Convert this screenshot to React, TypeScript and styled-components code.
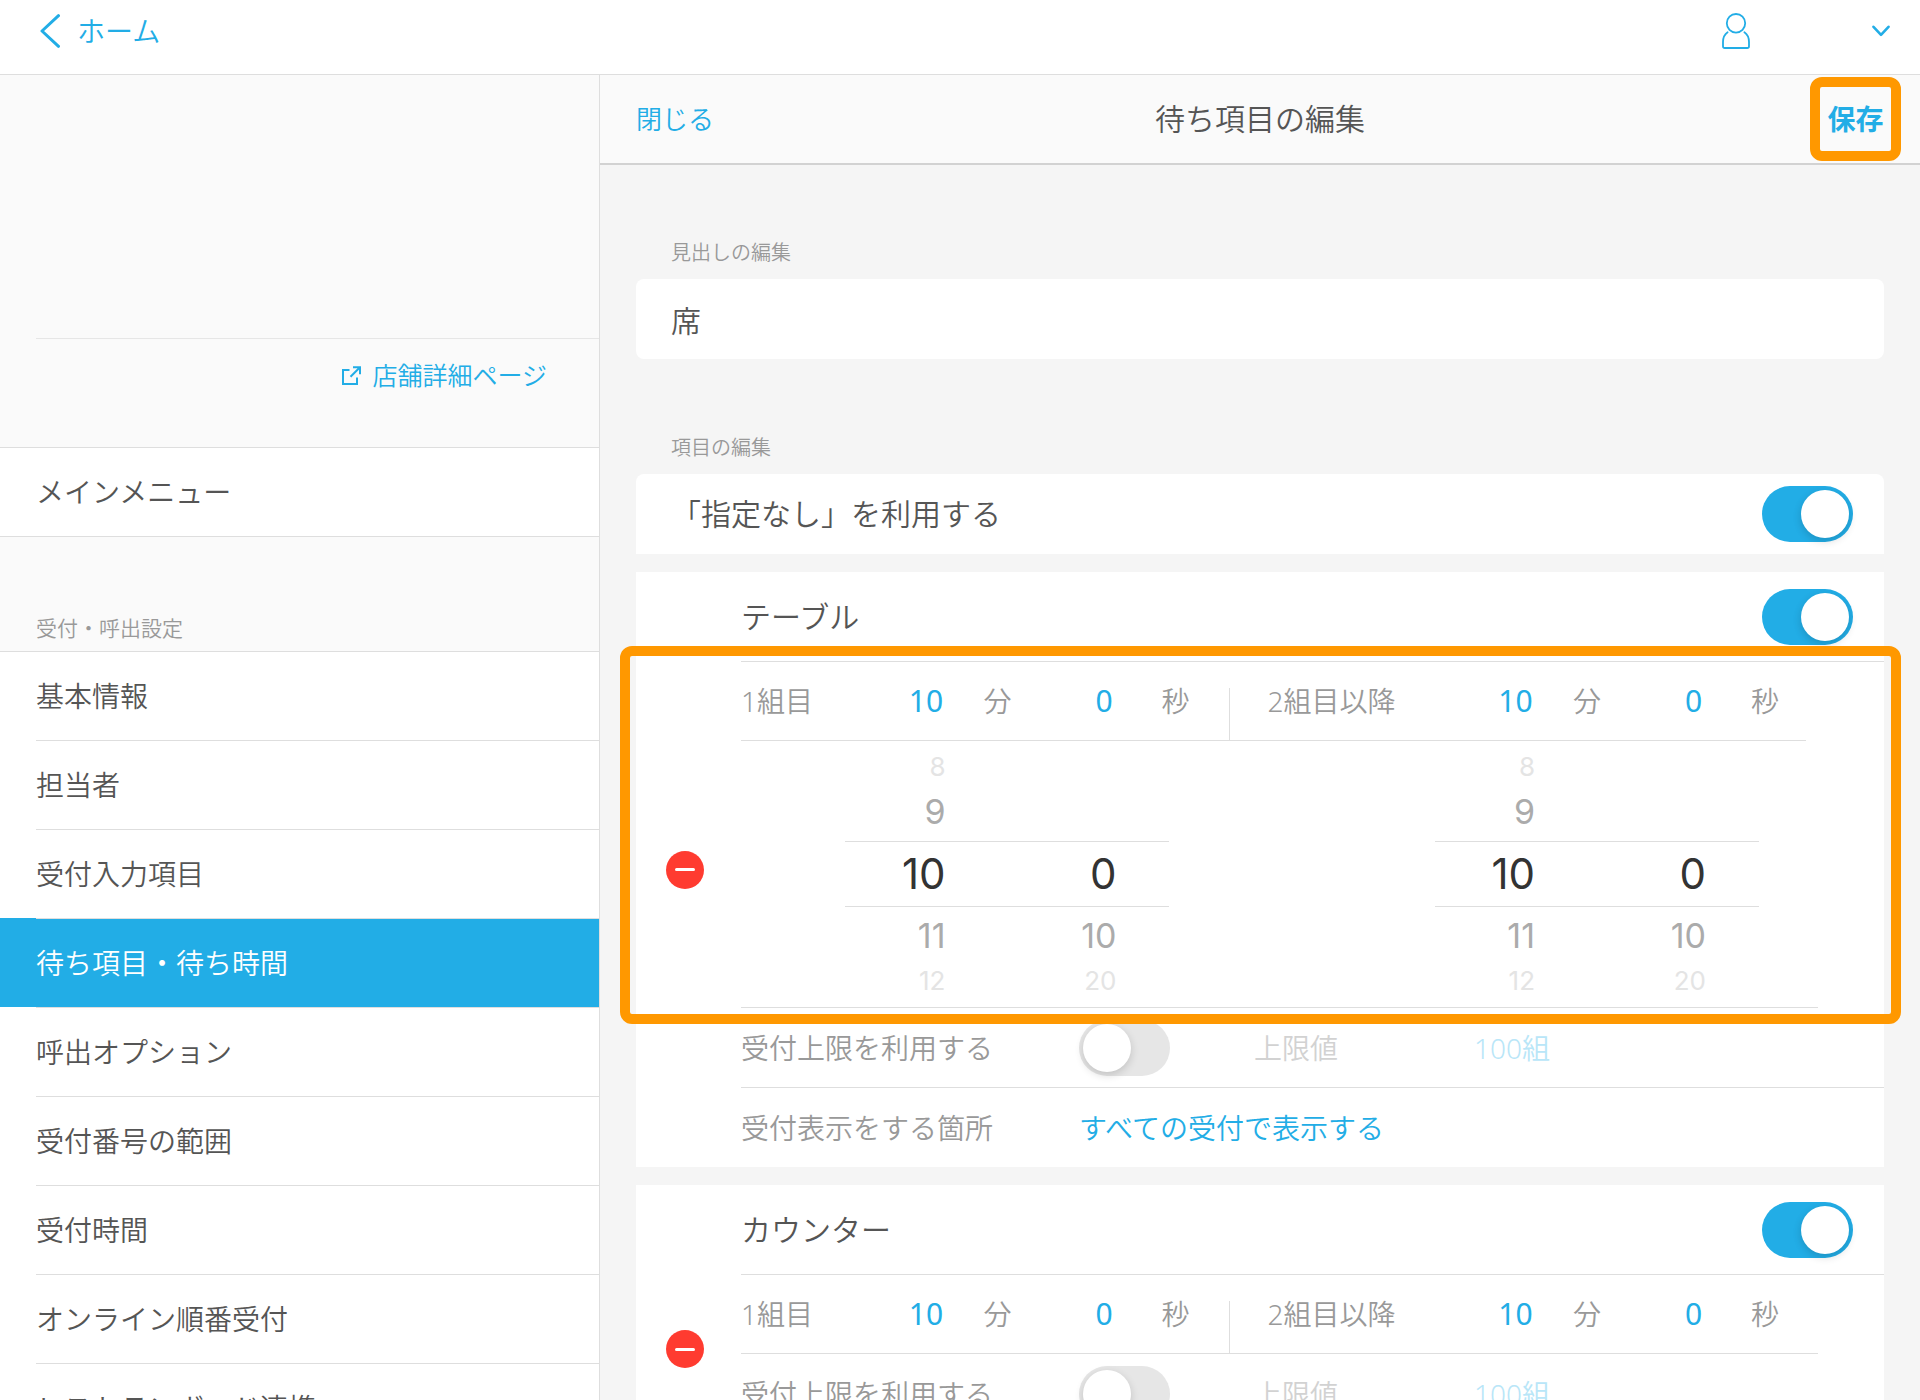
import React, { useId, useState } from "react";
import styled, { createGlobalStyle, css } from "styled-components";

const color = {
  accent: "#22ade6",
  accentFaded: "#b9e6f8",
  text: "#555555",
  sub: "#999999",
  faded: "#d2d2d2",
  line: "#dedede",
  side: "#fafafa",
  base: "#f5f5f5",
  danger: "#ff3b30",
  mark: "#ff9800",
};

const GlobalStyle = createGlobalStyle`
  *, *::before, *::after { box-sizing: border-box; }
  body {
    margin: 0;
    color: ${color.text};
    background: ${color.base};
    font-family: "Noto Sans", "Noto Sans CJK JP", sans-serif;
    font-weight: 350;
    line-height: 1;
  }
  button, input { font: inherit; color: inherit; }
  button { padding: 0; border: 0; background: none; cursor: pointer; }
  a { color: inherit; text-decoration: none; }
  h1, h2, ul, p { margin: 0; padding: 0; font-weight: inherit; }
  ul { list-style: none; }
`;

const Page = styled.div`
  display: flex;
  flex-direction: column;
  height: 100vh;
  overflow: hidden;
`;

const TopBar = styled.header`
  display: flex;
  flex: none;
  align-items: center;
  justify-content: space-between;
  height: 75px;
  padding: 0 30px 13px 40px;
  border-bottom: 1px solid ${color.line};
  background: #fff;
  color: ${color.accent};
`;

const HomeLink = styled.a`
  display: flex;
  align-items: center;
  gap: 17px;
  font-size: 28px;
`;

const AccountButton = styled.button`
  display: flex;
  align-items: center;
  gap: 122px;
`;

const Body = styled.div`
  display: flex;
  flex: 1;
  min-height: 0;
`;

const Sidebar = styled.aside`
  flex: none;
  width: 600px;
  overflow: hidden;
  border-right: 1px solid ${color.line};
  background: ${color.side};
`;

const ShopArea = styled.div`
  height: 264px;
  margin-left: 36px;
  border-bottom: 1px solid #e6e6e6;
`;

const ShopLinkRow = styled.div`
  display: flex;
  justify-content: flex-end;
  height: 109px;
  padding: 24px 52px 0 0;
  border-bottom: 1px solid ${color.line};
`;

const ShopLink = styled.a`
  display: flex;
  align-items: center;
  gap: 11px;
  height: 25px;
  color: ${color.accent};
  font-size: 25px;
`;

const MenuGroup = styled.ul`
  background: #fff;
`;

const MenuItem = styled.li<{ $active?: boolean }>`
  padding-left: 36px;
  background: ${(p) => (p.$active ? color.accent : "#fff")};
  color: ${(p) => (p.$active ? "#fff" : "inherit")};
`;

const MenuLink = styled.a`
  display: flex;
  align-items: center;
  height: 89px;
  border-top: 1px solid ${color.line};
  font-size: 28px;

  li:first-child > & {
    height: 88px;
    border-top: 0;
  }
`;

const GroupTitle = styled.h2`
  display: flex;
  align-items: flex-end;
  height: 116px;
  padding: 0 36px 12px;
  border-top: 1px solid ${color.line};
  border-bottom: 1px solid ${color.line};
  color: ${color.sub};
  font-size: 21px;
`;

const Panel = styled.main`
  display: flex;
  flex: 1;
  flex-direction: column;
  min-width: 0;
`;

const PanelBar = styled.div`
  display: grid;
  flex: none;
  grid-template-columns: 1fr auto 1fr;
  align-items: center;
  height: 90px;
  padding: 0 19px;
  border-bottom: 2px solid #d2d2d2;
  background: ${color.side};
`;

const CloseButton = styled.button`
  justify-self: start;
  padding: 0 17px;
  color: ${color.accent};
  font-size: 26px;
`;

const PanelTitle = styled.h1`
  font-size: 30px;
`;

const SaveButton = styled.button`
  justify-self: end;
  width: 91px;
  height: 84px;
  border: 10px solid ${color.mark};
  border-radius: 12px;
  color: ${color.accent};
  font-size: 28px;
  font-weight: 700;
`;

const Form = styled.form`
  flex: 1;
  min-height: 0;
  padding: 0 36px;
  overflow: hidden;
`;

const fieldTitle = css`
  display: flex;
  align-items: flex-end;
  padding: 0 35px 16px;
  color: ${color.sub};
  font-size: 20px;
`;

const FieldTitle = styled.label`
  ${fieldTitle}
  height: 114px;
`;

const ListTitle = styled.h2`
  ${fieldTitle}
  height: 115px;
`;

const TextField = styled.input`
  display: block;
  width: 100%;
  height: 80px;
  padding: 0 35px;
  border: 0;
  border-radius: 8px;
  outline: 0;
  background: #fff;
  font-size: 30px;
`;

const CardList = styled.div`
  display: flex;
  flex-direction: column;
  gap: 18px;
`;

const PlainCard = styled.section`
  display: flex;
  align-items: center;
  justify-content: space-between;
  height: 80px;
  padding: 0 31px 0 35px;
  border-radius: 8px 8px 0 0;
  background: #fff;
  font-size: 30px;
`;

const ItemCard = styled.section`
  display: grid;
  grid-template-columns: 105px 1fr;
  align-items: center;
  background: #fff;
`;

const RemoveButton = styled.button`
  display: grid;
  place-items: center;
  width: 38px;
  height: 38px;
  margin-left: 30px;
  border-radius: 50%;
  background: ${color.danger};

  &::before {
    content: "";
    width: 20px;
    height: 3px;
    border-radius: 2px;
    background: #fff;
  }
`;

const ItemHead = styled.div`
  display: flex;
  align-items: center;
  justify-content: space-between;
  height: 89px;
  padding-right: 31px;
  font-size: 30px;
`;

const Rule = styled.div<{ $end: number }>`
  height: 1px;
  margin-right: ${(p) => p.$end}px;
  background: ${color.line};
`;

const Switch = styled.input.attrs({ type: "checkbox", role: "switch" })`
  display: flex;
  flex: none;
  align-items: center;
  width: 91px;
  height: 56px;
  margin: 0;
  padding: 4px;
  appearance: none;
  border-radius: 28px;
  background: #e6e6e6;
  cursor: pointer;

  &::before {
    content: "";
    width: 48px;
    height: 48px;
    border-radius: 50%;
    background: #fff;
    box-shadow: 0 3px 8px rgba(0, 0, 0, 0.16);
  }

  &:checked {
    justify-content: flex-end;
    background: ${color.accent};
  }
`;

const TimeArea = styled.div`
  position: relative;
`;

const Highlight = styled.div`
  position: absolute;
  inset: -16px -17px -16px -121px;
  border: 10px solid ${color.mark};
  border-radius: 12px;
  pointer-events: none;
`;

const twoGroups = css`
  display: grid;
  grid-template-columns: 29fr 35fr;
  margin-right: 65px;
`;

const TimeRow = styled.div`
  ${twoGroups}
  height: 78px;
  color: ${color.sub};
  font-size: 28px;
`;

const TimeGroup = styled.div`
  display: flex;
  align-items: center;
  justify-content: space-between;
  padding-right: 36px;

  & + & {
    position: relative;
    padding-left: 38px;
  }

  & + &::before {
    content: "";
    position: absolute;
    bottom: 0;
    left: 0;
    width: 1px;
    height: 52px;
    background: ${color.line};
  }
`;

const TimeValues = styled.div`
  display: flex;
  gap: 35px;
`;

const TimePair = styled.span`
  display: grid;
  grid-template-columns: 107px 36px;
  align-items: center;
  justify-items: center;
`;

const ValueButton = styled.button`
  width: 100%;
  color: ${color.accent};
  font-size: 30px;
  font-weight: 400;
`;

const PickerRow = styled.div`
  ${twoGroups}
  padding: 10px 0;
`;

const Picker = styled.div`
  position: relative;
  display: grid;
  grid-template-columns: 100px 171px;
  justify-self: end;
  width: 324px;
  margin-right: 60px;

  &::before {
    content: "";
    position: absolute;
    inset: 90px 0;
    border: solid ${color.line};
    border-width: 1px 0;
    pointer-events: none;
  }
`;

const Wheel = styled.div`
  display: flex;
  flex-direction: column;
  align-items: stretch;
`;

const wheelLook = [
  { height: 32, size: 26, ink: "#e4e4e4" },
  { height: 58, size: 34, ink: "#ababab" },
  { height: 66, size: 42, ink: "#333333" },
  { height: 58, size: 34, ink: "#ababab" },
  { height: 32, size: 26, ink: "#e4e4e4" },
];

const WheelItem = styled.button<{ $slot: number }>`
  height: ${(p) => wheelLook[p.$slot].height}px;
  color: ${(p) => wheelLook[p.$slot].ink};
  font-family: Inter, "Noto Sans", sans-serif;
  font-size: ${(p) => wheelLook[p.$slot].size}px;
  font-weight: 400;
  text-align: right;
`;

const OptionRow = styled.div`
  display: grid;
  grid-template-columns: 338px 175px 220px 1fr;
  align-items: center;
  height: 79px;
  color: ${color.sub};
  font-size: 28px;
`;

const LimitLabel = styled.span`
  color: ${color.faded};
`;

const LimitButton = styled.button`
  justify-self: start;
  color: ${color.accentFaded};
`;

const PlaceButton = styled.button`
  grid-column: 2 / -1;
  justify-self: start;
  color: ${color.accent};
`;

const BackIcon = () => (
  <svg width="20" height="34" viewBox="0 0 20 34" fill="none" stroke="currentColor" strokeWidth="3" strokeLinecap="round" strokeLinejoin="round" aria-hidden="true">
    <path d="M18.5 1.7 2 17l16.500 15.300" />
  </svg>
);

const PersonIcon = () => (
  <svg width="28" height="36" viewBox="0 0 28 36" fill="none" stroke="currentColor" strokeWidth="1.800" strokeLinecap="round" strokeLinejoin="round" aria-hidden="true">
    <ellipse cx="14" cy="10.300" rx="9.200" ry="9.300" />
    <path d="M5.600 19.200C2.500 21.300 1 24.800 1 29v4.200c0 1.200.7 1.800 1.800 1.800h22.400c1.100 0 1.800-.6 1.800-1.800V29c0-4.200-1.500-7.700-4.600-9.800" />
  </svg>
);

const DownIcon = () => (
  <svg width="18" height="12" viewBox="0 0 18 12" fill="none" stroke="currentColor" strokeWidth="2.600" strokeLinecap="round" strokeLinejoin="round" aria-hidden="true">
    <path d="m1.500 1.800 7.500 8 7.500-8" />
  </svg>
);

const ExternalIcon = () => (
  <svg width="19" height="19" viewBox="0 0 19 19" fill="none" stroke="currentColor" strokeWidth="2" aria-hidden="true">
    <path d="M7.500 4H1v14h14v-6.500M11 1.200h7v7M17.500 1.700 8.500 10.700" />
  </svg>
);

const menu = [
  "基本情報",
  "担当者",
  "受付入力項目",
  "待ち項目・待ち時間",
  "呼出オプション",
  "受付番号の範囲",
  "受付時間",
  "オンライン順番受付",
  "レストランボード連携",
];

const minuteChoices = Array.from({ length: 60 }, (_, i) => i);
const secondChoices = [0, 10, 20, 30, 40, 50];

type Time = { minute: number; second: number };

type WheelColumnProps = {
  label: string;
  choices: number[];
  value: number;
  onPick: (value: number) => void;
};

function WheelColumn({ label, choices, value, onPick }: WheelColumnProps) {
  const at = choices.indexOf(value);
  return (
    <Wheel role="group" aria-label={label}>
      {wheelLook.map((_, slot) => {
        const choice = choices[at + slot - 2];
        return (
          <WheelItem
            key={slot}
            type="button"
            $slot={slot}
            disabled={choice === undefined}
            onClick={() => onPick(choice)}
          >
            {choice}
          </WheelItem>
        );
      })}
    </Wheel>
  );
}

function WaitItem({ name, open = false }: { name: string; open?: boolean }) {
  const id = useId();
  const [times, setTimes] = useState<Time[]>([
    { minute: 10, second: 0 },
    { minute: 10, second: 0 },
  ]);
  const update = (index: number, part: Partial<Time>) =>
    setTimes(times.map((t, i) => (i === index ? { ...t, ...part } : t)));
  const groups = ["1組目", "2組目以降"];

  return (
    <ItemCard>
      <RemoveButton type="button" aria-label={`${name}を削除`} />
      <div>
        <ItemHead>
          <label htmlFor={`${id}-use`}>{name}</label>
          <Switch id={`${id}-use`} defaultChecked />
        </ItemHead>
        <Rule $end={0} />
        <TimeArea>
          <TimeRow>
            {groups.map((group, i) => (
              <TimeGroup key={group}>
                <span>{group}</span>
                <TimeValues>
                  <TimePair>
                    <ValueButton type="button">{times[i].minute}</ValueButton>分
                  </TimePair>
                  <TimePair>
                    <ValueButton type="button">{times[i].second}</ValueButton>秒
                  </TimePair>
                </TimeValues>
              </TimeGroup>
            ))}
          </TimeRow>
          <Rule $end={open ? 78 : 66} />
          {open && (
            <>
              <PickerRow>
                {groups.map((group, i) => (
                  <Picker key={group}>
                    <WheelColumn
                      label={`${group} 分`}
                      choices={minuteChoices}
                      value={times[i].minute}
                      onPick={(minute) => update(i, { minute })}
                    />
                    <WheelColumn
                      label={`${group} 秒`}
                      choices={secondChoices}
                      value={times[i].second}
                      onPick={(second) => update(i, { second })}
                    />
                  </Picker>
                ))}
              </PickerRow>
              <Rule $end={66} />
              <Highlight />
            </>
          )}
        </TimeArea>
        <OptionRow>
          <label htmlFor={`${id}-limit`}>受付上限を利用する</label>
          <Switch id={`${id}-limit`} />
          <LimitLabel>上限値</LimitLabel>
          <LimitButton type="button">100組</LimitButton>
        </OptionRow>
        <Rule $end={0} />
        <OptionRow>
          <span>受付表示をする箇所</span>
          <PlaceButton type="button">すべての受付で表示する</PlaceButton>
        </OptionRow>
      </div>
    </ItemCard>
  );
}

export default function App() {
  return (
    <Page>
      <GlobalStyle />
      <TopBar>
        <HomeLink href="#home">
          <BackIcon />
          ホーム
        </HomeLink>
        <AccountButton type="button" aria-label="アカウント">
          <PersonIcon />
          <DownIcon />
        </AccountButton>
      </TopBar>
      <Body>
        <Sidebar>
          <ShopArea />
          <ShopLinkRow>
            <ShopLink href="#shop">
              <ExternalIcon />
              店舗詳細ページ
            </ShopLink>
          </ShopLinkRow>
          <nav>
            <MenuGroup>
              <MenuItem>
                <MenuLink href="#main">メインメニュー</MenuLink>
              </MenuItem>
            </MenuGroup>
            <GroupTitle>受付・呼出設定</GroupTitle>
            <MenuGroup>
              {menu.map((item, i) => (
                <MenuItem key={item} $active={i === 3}>
                  <MenuLink href={`#menu-${i}`}>{item}</MenuLink>
                </MenuItem>
              ))}
            </MenuGroup>
          </nav>
        </Sidebar>
        <Panel>
          <PanelBar>
            <CloseButton type="button">閉じる</CloseButton>
            <PanelTitle>待ち項目の編集</PanelTitle>
            <SaveButton type="button">保存</SaveButton>
          </PanelBar>
          <Form>
            <FieldTitle htmlFor="heading">見出しの編集</FieldTitle>
            <TextField id="heading" type="text" defaultValue="席" />
            <ListTitle>項目の編集</ListTitle>
            <CardList>
              <PlainCard>
                <label htmlFor="unspecified">「指定なし」を利用する</label>
                <Switch id="unspecified" defaultChecked />
              </PlainCard>
              <WaitItem name="テーブル" open />
              <WaitItem name="カウンター" />
            </CardList>
          </Form>
        </Panel>
      </Body>
    </Page>
  );
}
